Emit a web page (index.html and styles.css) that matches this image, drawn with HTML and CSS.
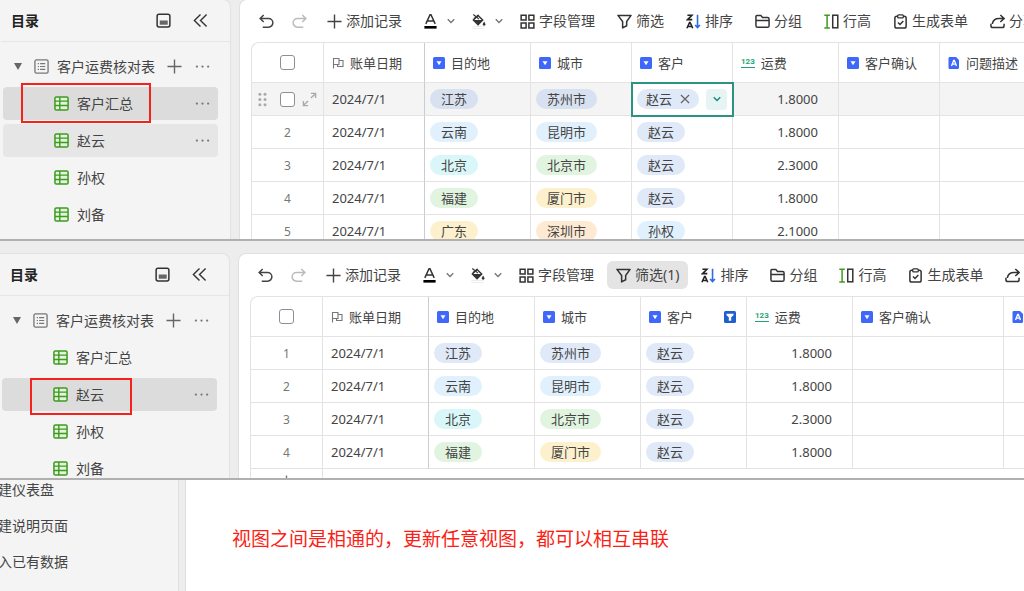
FILE: index.html
```html
<!DOCTYPE html>
<html lang="zh-CN">
<head>
  <meta charset="UTF-8" />
  <meta name="viewport" content="width=device-width, initial-scale=1.0"/>
  <title>客户运费核对表</title>
  <link rel="stylesheet" href="styles.css">
</head>
<body>

  <svg class="sprite" aria-hidden="true">
    <symbol id="i-panel" viewBox="0 0 16 16"><rect x="1.2" y="1.2" width="13.6" height="13.6" rx="2" fill="none" stroke="#333" stroke-width="1.6"/><rect x="4" y="8" width="8.5" height="4.5" fill="#666"/></symbol>
    <symbol id="i-collapse" viewBox="0 0 16 16"><path d="M8 1.5L1.5 8 8 14.5M14.500 1.5L8 8l6.5 6.5" fill="none" stroke="#333" stroke-width="1.5"/></symbol>
    <symbol id="i-list" viewBox="0 0 16 16"><rect x="1" y="1" width="14" height="14" rx="1.5" fill="none" stroke="#777" stroke-width="1.4"/><path d="M4 5h1.3M4 8h1.3M4 11h1.3M6.500 5H12M6.500 8H12M6.500 11H12" stroke="#777" stroke-width="1.3"/></symbol>
    <symbol id="i-plus" viewBox="0 0 16 16"><path d="M8 .5v15M.5 8h15" stroke="currentColor" stroke-width="1.5"/></symbol>
    <symbol id="i-more" viewBox="0 0 16 16"><circle cx="2" cy="8" r="1.2" fill="#777"/><circle cx="8" cy="8" r="1.2" fill="#777"/><circle cx="14" cy="8" r="1.2" fill="#777"/></symbol>
    <symbol id="i-sheet" viewBox="0 0 16 16"><rect x="1" y="1" width="14" height="14" rx="1.5" fill="#e3f3dc" stroke="#3f9a22" stroke-width="1.6"/><path d="M1 5.5h14M1 10.2h14M6.2 1v14" stroke="#3f9a22" stroke-width="1.5"/></symbol>
    <symbol id="i-undo" viewBox="0 0 16 16"><path d="M5 1L1.2 4.800 5 8.600M1.2 4.800h9a4.600 4.600 0 0 1 0 9.200H4" fill="none" stroke="currentColor" stroke-width="1.6"/></symbol>
    <symbol id="i-redo" viewBox="0 0 16 16"><path d="M11 1l3.8 3.8L11 8.600M14.800 4.800h-9a4.600 4.600 0 0 0 0 9.200H12" fill="none" stroke="currentColor" stroke-width="1.6"/></symbol>
    <symbol id="i-color" viewBox="0 0 16 16"><path d="M3 10.500L7.500 .800h1L13 10.500M4.500 7.500h7" fill="none" stroke="#333" stroke-width="1.6"/><rect x="1.500" y="12.800" width="13" height="2.800" fill="#000"/></symbol>
    <symbol id="i-fill" viewBox="0 0 16 16"><path d="M2.500 6.500L7.500 1.500l5 5-5 5z" fill="none" stroke="#333" stroke-width="1.5"/><path d="M2.500 6.500h10l-5 5z" fill="#333"/><path d="M2.500 .500l6 5M8 1L3 5" stroke="#333" stroke-width="1.3"/><path d="M14 8l1.300 2.300a1.500 1.500 0 1 1-2.600 0z" fill="#333"/><rect x="2" y="13.300" width="12" height="2.200" rx=".5" fill="#fff" stroke="#ddd" stroke-width=".6"/></symbol>
    <symbol id="i-down" viewBox="0 0 16 16"><path d="M1.500 4.500L8 11l6.500-6.500" fill="none" stroke="currentColor" stroke-width="2.800"/></symbol>
    <symbol id="i-fields" viewBox="0 0 16 16"><path d="M1.200 1.200h5.300v5.300H1.200zM9.500 1.200h5.300v5.300H9.500zM1.200 9.500h5.300v5.300H1.200zM9.500 9.500h5.300v5.300H9.500z" fill="none" stroke="#333" stroke-width="1.6"/></symbol>
    <symbol id="i-filter" viewBox="0 0 16 16"><path d="M1 1.500h14L10.300 8v4.500L6 14.800V8z" fill="none" stroke="#333" stroke-width="1.6" stroke-linejoin="round"/></symbol>
    <symbol id="i-sort" viewBox="0 0 16 16"><path d="M1.500 1.300h4.800L1.700 6h5M1 15.200L3.800 9h.6l2.800 6.200M2.200 13.300H6" fill="none" stroke="#222" stroke-width="1.7"/><path d="M12.300 .800v13.400M9.700 11.800l2.600 2.700 2.600-2.700" fill="none" stroke="#2b6be4" stroke-width="1.7"/></symbol>
    <symbol id="i-group" viewBox="0 0 16 16"><path d="M1 12.500v-10Q1 1.500 2 1.500h4.200L8 3.800h5.500Q15 3.800 15 5.200v7.300q0 1.700-1.700 1.700H2.700Q1 14.200 1 12.500zM1.200 7h13.600" fill="none" stroke="#333" stroke-width="1.6"/></symbol>
    <symbol id="i-height" viewBox="0 0 16 16"><path d="M.3 1.200h6M.3 14.800h6M3.300 1.200v13.600" fill="none" stroke="#3f9a22" stroke-width="1.6"/><rect x="9.300" y="1.300" width="5.400" height="13.400" fill="none" stroke="#333" stroke-width="1.6"/></symbol>
    <symbol id="i-form" viewBox="0 0 16 16"><rect x="2" y="2.300" width="12" height="12.700" rx="2" fill="none" stroke="#333" stroke-width="1.6"/><rect x="5" y="1" width="6" height="3.200" rx="1" fill="#fff" stroke="#333" stroke-width="1.4"/><path d="M5.300 9l2.200 2.200L11 7.500" fill="none" stroke="#333" stroke-width="1.6"/></symbol>
    <symbol id="i-share" viewBox="0 0 16 16"><path d="M11 1l4 3.800-4 3.800M14.500 4.800h-5Q3.500 4.800 2.500 10.500M1 10.500v2q0 2 2 2h10q2 0 2-2v-2" fill="none" stroke="#333" stroke-width="1.6"/></symbol>
    <symbol id="i-flag" viewBox="0 0 12 12"><path d="M1.500 11.500v-10H7v6H1.500M7 3.500h4v6H5.500v-2" fill="none" stroke="#777" stroke-width="1.1"/></symbol>
    <symbol id="i-select" viewBox="0 0 12 12"><rect width="12" height="12" rx="1.5" fill="#3f68fb"/><path d="M3.500 4.300h5L6 8.200z" fill="#fff"/></symbol>
    <symbol id="i-text" viewBox="0 0 12 12"><path d="M1.500 0H8l3 3v7.500q0 1.500-1.500 1.500h-8Q.5 12 .5 10.500v-9Q.5 0 1.500 0z" fill="#3f68fb"/><path d="M3.500 9l2.200-5.700h.6L8.500 9M4.500 7.200h3" fill="none" stroke="#fff" stroke-width="1.3"/></symbol>
    <symbol id="i-filtered" viewBox="0 0 12 12"><rect width="12" height="12" rx="1.5" fill="#1f5fd0"/><path d="M2.500 2.800h7v1.400L7.200 6.300v3.500H4.800V6.300L2.500 4.200z" fill="#fff"/></symbol>
    <symbol id="i-drag" viewBox="0 0 16 16"><g fill="#aaa"><circle cx="2" cy="2.500" r="1.600"/><circle cx="7.500" cy="2.500" r="1.600"/><circle cx="2" cy="8" r="1.600"/><circle cx="7.500" cy="8" r="1.600"/><circle cx="2" cy="13.500" r="1.600"/><circle cx="7.500" cy="13.500" r="1.600"/></g></symbol>
    <symbol id="i-expand" viewBox="0 0 16 16"><path d="M9.500 1.500h5v5M14.500 1.500l-5 5M6.500 14.500h-5v-5M1.500 14.500l5-5" fill="none" stroke="#aaa" stroke-width="1.5"/></symbol>
    <symbol id="i-close" viewBox="0 0 16 16"><path d="M1.500 1.500l13 13M14.500 1.500l-13 13" stroke="#666" stroke-width="2"/></symbol>
  </svg>

  <section class="shot shot-first">
    <aside class="sidebar">
      <header class="side-head">
        <h2>目录</h2>
        <button aria-label="面板"><svg class="icon"><use href="#i-panel"/></svg></button>
        <button aria-label="收起"><svg class="icon"><use href="#i-collapse"/></svg></button>
      </header>
      <ul class="tree">
        <li class="parent">
          <span class="caret"></span>
          <svg class="icon"><use href="#i-list"/></svg>
          <a href="#">客户运费核对表</a>
          <button aria-label="新增"><svg class="icon"><use href="#i-plus"/></svg></button>
          <button aria-label="更多"><svg class="icon"><use href="#i-more"/></svg></button>
        </li>
        <li class="child active">
          <svg class="icon"><use href="#i-sheet"/></svg><a href="#">客户汇总</a>
          <button aria-label="更多"><svg class="icon"><use href="#i-more"/></svg></button>
          <span class="mark mark-wide"></span>
        </li>
        <li class="child hover">
          <svg class="icon"><use href="#i-sheet"/></svg><a href="#">赵云</a>
          <button aria-label="更多"><svg class="icon"><use href="#i-more"/></svg></button>
        </li>
        <li class="child"><svg class="icon"><use href="#i-sheet"/></svg><a href="#">孙权</a></li>
        <li class="child"><svg class="icon"><use href="#i-sheet"/></svg><a href="#">刘备</a></li>
      </ul>
    </aside>

    <main class="main">
      <div class="toolbar">
        <button class="history" aria-label="撤销"><svg class="icon"><use href="#i-undo"/></svg></button>
        <button class="history disabled" aria-label="重做"><svg class="icon"><use href="#i-redo"/></svg></button>
        <button><svg class="icon"><use href="#i-plus"/></svg>添加记录</button>
        <button class="picker" aria-label="字体颜色"><svg class="icon"><use href="#i-color"/></svg><svg class="chevron"><use href="#i-down"/></svg></button>
        <button class="picker" aria-label="填充颜色"><svg class="icon"><use href="#i-fill"/></svg><svg class="chevron"><use href="#i-down"/></svg></button>
        <button><svg class="icon"><use href="#i-fields"/></svg>字段管理</button>
        <button><svg class="icon"><use href="#i-filter"/></svg>筛选</button>
        <button><svg class="icon"><use href="#i-sort"/></svg>排序</button>
        <button><svg class="icon"><use href="#i-group"/></svg>分组</button>
        <button><svg class="icon"><use href="#i-height"/></svg>行高</button>
        <button><svg class="icon"><use href="#i-form"/></svg>生成表单</button>
        <button><svg class="icon"><use href="#i-share"/></svg>分享</button>
      </div>
      <div class="grid">
        <table>
          <colgroup>
            <col class="w-check"><col class="w-narrow"><col class="w-normal"><col class="w-narrow"><col class="w-narrow"><col class="w-normal"><col class="w-narrow"><col class="w-wide">
          </colgroup>
          <thead>
            <tr>
              <th class="num"><input type="checkbox" aria-label="全选"></th>
              <th><div class="th"><svg><use href="#i-flag"/></svg>账单日期</div></th>
              <th><div class="th"><svg><use href="#i-select"/></svg>目的地</div></th>
              <th><div class="th"><svg><use href="#i-select"/></svg>城市</div></th>
              <th><div class="th"><svg><use href="#i-select"/></svg>客户</div></th>
              <th><div class="th"><span class="digits">123</span>运费</div></th>
              <th><div class="th"><svg><use href="#i-select"/></svg>客户确认</div></th>
              <th><div class="th"><svg><use href="#i-text"/></svg>问题描述</div></th>
            </tr>
          </thead>
          <tbody>
            <tr class="current">
              <td class="num">
                <div class="row-tools">
                  <svg class="icon"><use href="#i-drag"/></svg>
                  <input type="checkbox" aria-label="选择第1行">
                  <svg class="icon"><use href="#i-expand"/></svg>
                </div>
              </td>
              <td>2024/7/1</td>
              <td><span class="tag slate">江苏</span></td>
              <td><span class="tag slate">苏州市</span></td>
              <td class="editing">
                <div class="editor">
                  <span class="tag indigo">赵云<button class="remove" aria-label="移除"><svg><use href="#i-close"/></svg></button></span>
                  <button class="open" aria-label="展开选项"><svg class="chevron"><use href="#i-down"/></svg></button>
                </div>
              </td>
              <td class="amount">1.8000</td><td></td><td></td>
            </tr>
            <tr><td class="num">2</td><td>2024/7/1</td><td><span class="tag sky">云南</span></td><td><span class="tag sky">昆明市</span></td><td><span class="tag indigo">赵云</span></td><td class="amount">1.8000</td><td></td><td></td></tr>
            <tr><td class="num">3</td><td>2024/7/1</td><td><span class="tag cyan">北京</span></td><td><span class="tag green">北京市</span></td><td><span class="tag indigo">赵云</span></td><td class="amount">2.3000</td><td></td><td></td></tr>
            <tr><td class="num">4</td><td>2024/7/1</td><td><span class="tag green">福建</span></td><td><span class="tag yellow">厦门市</span></td><td><span class="tag indigo">赵云</span></td><td class="amount">1.8000</td><td></td><td></td></tr>
            <tr><td class="num">5</td><td>2024/7/1</td><td><span class="tag yellow">广东</span></td><td><span class="tag orange">深圳市</span></td><td><span class="tag sky">孙权</span></td><td class="amount">2.1000</td><td></td><td></td></tr>
          </tbody>
        </table>
      </div>
    </main>
  </section>

  <section class="shot shot-second">
    <aside class="sidebar">
      <header class="side-head">
        <h2>目录</h2>
        <button aria-label="面板"><svg class="icon"><use href="#i-panel"/></svg></button>
        <button aria-label="收起"><svg class="icon"><use href="#i-collapse"/></svg></button>
      </header>
      <ul class="tree">
        <li class="parent">
          <span class="caret"></span>
          <svg class="icon"><use href="#i-list"/></svg>
          <a href="#">客户运费核对表</a>
          <button aria-label="新增"><svg class="icon"><use href="#i-plus"/></svg></button>
          <button aria-label="更多"><svg class="icon"><use href="#i-more"/></svg></button>
        </li>
        <li class="child"><svg class="icon"><use href="#i-sheet"/></svg><a href="#">客户汇总</a></li>
        <li class="child active">
          <svg class="icon"><use href="#i-sheet"/></svg><a href="#">赵云</a>
          <button aria-label="更多"><svg class="icon"><use href="#i-more"/></svg></button>
          <span class="mark mark-narrow"></span>
        </li>
        <li class="child"><svg class="icon"><use href="#i-sheet"/></svg><a href="#">孙权</a></li>
        <li class="child"><svg class="icon"><use href="#i-sheet"/></svg><a href="#">刘备</a></li>
      </ul>
    </aside>

    <div class="main">
      <div class="toolbar">
        <button class="history" aria-label="撤销"><svg class="icon"><use href="#i-undo"/></svg></button>
        <button class="history disabled" aria-label="重做"><svg class="icon"><use href="#i-redo"/></svg></button>
        <button><svg class="icon"><use href="#i-plus"/></svg>添加记录</button>
        <button class="picker" aria-label="字体颜色"><svg class="icon"><use href="#i-color"/></svg><svg class="chevron"><use href="#i-down"/></svg></button>
        <button class="picker" aria-label="填充颜色"><svg class="icon"><use href="#i-fill"/></svg><svg class="chevron"><use href="#i-down"/></svg></button>
        <button><svg class="icon"><use href="#i-fields"/></svg>字段管理</button>
        <button class="on"><svg class="icon"><use href="#i-filter"/></svg>筛选(1)</button>
        <button><svg class="icon"><use href="#i-sort"/></svg>排序</button>
        <button><svg class="icon"><use href="#i-group"/></svg>分组</button>
        <button><svg class="icon"><use href="#i-height"/></svg>行高</button>
        <button><svg class="icon"><use href="#i-form"/></svg>生成表单</button>
        <button aria-label="分享"><svg class="icon"><use href="#i-share"/></svg></button>
      </div>
      <div class="grid">
        <table>
          <colgroup>
            <col class="w-check"><col class="w-normal"><col class="w-normal"><col class="w-normal"><col class="w-normal"><col class="w-normal"><col class="w-wide"><col class="w-wide">
          </colgroup>
          <thead>
            <tr>
              <th class="num"><input type="checkbox" aria-label="全选"></th>
              <th><div class="th"><svg><use href="#i-flag"/></svg>账单日期</div></th>
              <th><div class="th"><svg><use href="#i-select"/></svg>目的地</div></th>
              <th><div class="th"><svg><use href="#i-select"/></svg>城市</div></th>
              <th><div class="th"><svg><use href="#i-select"/></svg>客户<svg class="filtered"><use href="#i-filtered"/></svg></div></th>
              <th><div class="th"><span class="digits">123</span>运费</div></th>
              <th><div class="th"><svg><use href="#i-select"/></svg>客户确认</div></th>
              <th><div class="th"><svg><use href="#i-text"/></svg></div></th>
            </tr>
          </thead>
          <tbody>
            <tr><td class="num">1</td><td>2024/7/1</td><td><span class="tag indigo">江苏</span></td><td><span class="tag indigo">苏州市</span></td><td><span class="tag indigo">赵云</span></td><td class="amount">1.8000</td><td></td><td></td></tr>
            <tr><td class="num">2</td><td>2024/7/1</td><td><span class="tag sky">云南</span></td><td><span class="tag sky">昆明市</span></td><td><span class="tag indigo">赵云</span></td><td class="amount">1.8000</td><td></td><td></td></tr>
            <tr><td class="num">3</td><td>2024/7/1</td><td><span class="tag cyan">北京</span></td><td><span class="tag green">北京市</span></td><td><span class="tag indigo">赵云</span></td><td class="amount">2.3000</td><td></td><td></td></tr>
            <tr><td class="num">4</td><td>2024/7/1</td><td><span class="tag green">福建</span></td><td><span class="tag yellow">厦门市</span></td><td><span class="tag indigo">赵云</span></td><td class="amount">1.8000</td><td></td><td></td></tr>
            <tr class="add"><td class="num"><svg class="icon"><use href="#i-plus"/></svg></td><td colspan="7"></td></tr>
          </tbody>
        </table>
      </div>
    </div>
  </section>

  <section class="shot shot-third">
    <nav class="create">
      <a href="#">建仪表盘</a>
      <a href="#">建说明页面</a>
      <a href="#">入已有数据</a>
    </nav>
    <div class="note">
      <p>视图之间是相通的，更新任意视图，都可以相互串联</p>
    </div>
  </section>

</body>
</html>
```
FILE: styles.css
```css
* {
  box-sizing: border-box;
}

body {
  margin: 0;
  height: 100vh;
  display: grid;
  grid-template-rows: 241fr 239fr 111fr;
  overflow: hidden;
  font-family: "Noto Sans", "Noto Sans CJK SC", sans-serif;
  font-size: 14px;
  color: #444;
  background-color: #ededed;
}

.sprite {
  position: absolute;
  width: 0;
  height: 0;
}

button {
  display: flex;
  align-items: center;
  padding: 0;
  border: none;
  background: none;
  font: inherit;
  color: inherit;
  white-space: nowrap;
  cursor: pointer;
}

a {
  color: inherit;
  text-decoration: none;
}

.icon {
  display: block;
  flex: none;
  width: 15px;
  height: 15px;
}

.chevron {
  flex: none;
  width: 8px;
  height: 8px;
  color: #777;
}

/* stacked panels */
.shot {
  display: flex;
  gap: 8px;
  min-height: 0;
  overflow: hidden;
  background-color: #ededed;
}

.shot-first,
.shot-second {
  border-bottom: 2px solid #b0b0b0;
}

.shot-first > * {
  margin-top: -1px;
}

.shot-second {
  padding-top: 12px;
}

.shot-second .sidebar {
  width: 230px;
  padding-left: 0;
}

/* sidebar */
.sidebar {
  flex: none;
  width: 231px;
  padding-left: 1px;
  background-color: #f4f4f4;
  border: 1px solid #e2e2e2;
  border-width: 1px 1px 0 0;
  border-radius: 0 8px 0 0;
}

.side-head {
  display: flex;
  align-items: center;
  gap: 22px;
  height: 42px;
  padding: 0 22px 0 10px;
  border-bottom: 1px solid #e6e6e6;
}

.side-head h2 {
  flex: 1;
  margin: 0;
  font-size: 14px;
  font-weight: 700;
  line-height: 20px;
  color: #222;
}

.tree {
  display: flex;
  flex-direction: column;
  gap: 4px;
  margin: 0;
  padding: 8px 12px 0 2px;
  list-style: none;
}

.tree li {
  position: relative;
  display: flex;
  align-items: center;
  gap: 8px;
  height: 33px;
  padding: 0 8px 0 11px;
  border-radius: 4px;
}

.tree a {
  flex: 1;
  line-height: 20px;
  white-space: nowrap;
}

.tree button {
  color: #666;
}

.tree .parent {
  gap: 8px;
}

.parent button + button {
  margin-left: 5px;
}

.parent .caret {
  margin-right: 4px;
  border: 4px solid transparent;
  border-top: 7px solid #666;
  border-bottom: 0;
}

.tree .child {
  padding-left: 51px;
}

.tree .active {
  background-color: #dcdcdc;
}

.tree .hover {
  background-color: #e6e6e6;
}

/* red box drawn round a view name */
.mark {
  position: absolute;
  top: -4px;
  bottom: -3px;
  border: 2px solid #f5221b;
}

.mark-wide {
  left: 18px;
  width: 130px;
}

.mark-narrow {
  top: 0;
  bottom: -4px;
  left: 28px;
  width: 102px;
}

/* toolbar */
.main {
  flex: 1;
  min-width: 0;
  overflow: hidden;
  background-color: #fff;
  border: 1px solid #e0e0e0;
  border-width: 1px 0 0 1px;
  border-radius: 8px 0 0 0;
}

.toolbar {
  display: flex;
  align-items: center;
  gap: 4px;
  height: 42px;
  padding-left: 12px;
}

.toolbar button {
  flex: none;
  gap: 4px;
  height: 28px;
  padding: 0 9px;
  border-radius: 6px;
  line-height: 20px;
}

.toolbar .history {
  padding: 0 7px;
}

.toolbar .disabled {
  color: #bbb;
}

.toolbar .picker {
  gap: 9px;
  padding: 0 4px 0 8px;
}

.toolbar .on {
  background-color: #e4e4e4;
}

/* data grid */
.grid {
  margin-left: 11px;
  overflow: hidden;
  border: 1px solid #e3e3e3;
  border-width: 1px 0 0 1px;
  border-radius: 8px 0 0 0;
}

table {
  width: max-content;
  table-layout: fixed;
  border-spacing: 0;
  font-size: 13px;
}

.w-check { width: 72px; }
.w-narrow { width: 101px; }
.w-normal { width: 106px; }
.w-wide { width: 151px; }

th,
td {
  height: 33px;
  padding: 0 6px 0 8px;
  border: 1px solid #e3e3e3;
  border-width: 0 1px 1px 0;
  text-align: left;
  font-weight: 400;
  white-space: nowrap;
}

th {
  height: 40px;
}

td:has(.tag) {
  padding-left: 5px;
}

th:nth-child(2),
td:nth-child(2) {
  border-right-color: #c9ccd3;
}

.th {
  display: flex;
  align-items: center;
  gap: 6px;
  line-height: 20px;
}

.th svg {
  flex: none;
  width: 12px;
  height: 12px;
}

.th .filtered {
  margin: 0 4px 0 auto;
}

.digits {
  border-bottom: 1px solid #1fa573;
  font-family: Roboto, sans-serif;
  font-size: 8px;
  font-weight: 700;
  line-height: 10px;
  color: #1fa573;
}

.num {
  padding: 0;
  text-align: center;
  color: #777;
}

td.num {
  font-size: 12px;
}

input[type="checkbox"] {
  appearance: none;
  display: block;
  width: 15px;
  height: 15px;
  margin: 0 auto;
  border: 1px solid #8b8f98;
  border-radius: 3px;
  background-color: #fff;
}

.row-tools {
  display: flex;
  align-items: center;
  justify-content: center;
  gap: 7px;
}

.row-tools input[type="checkbox"] {
  margin: 0;
}

.current td {
  background-color: #f4f4f4;
}

.amount {
  padding-right: 20px;
  text-align: right;
}

.add .num {
  padding-top: 6px;
  vertical-align: top;
}

.add .num .icon {
  margin: 0 auto;
}

.add td:last-child {
  border-right: 0;
}

.tag {
  display: inline-flex;
  align-items: center;
  height: 20px;
  padding: 0 11px;
  border-radius: 10px;
  line-height: 20px;
}

.slate { background-color: #d8e1f0; }
.indigo { background-color: #dfe9f8; }
.sky { background-color: #e0f1fd; }
.cyan { background-color: #d9f6f8; }
.green { background-color: #e0f4e0; }
.yellow { background-color: #fdf1cd; }
.orange { background-color: #feead2; }

.current .editing {
  padding-right: 2px;
  background-color: #fff;
  outline: 2px solid #2a9384;
  outline-offset: -1px;
}

.editor {
  display: flex;
  align-items: center;
  gap: 7px;
}

.editor .tag {
  padding: 0 9px;
}

.remove {
  margin-left: 8px;
}

.remove svg {
  width: 10px;
  height: 10px;
}

.open {
  flex: none;
  justify-content: center;
  width: 21px;
  height: 21px;
  border-radius: 4px;
  background-color: #e6f4f3;
}

.open .chevron {
  color: #158a7a;
}

/* bottom strip */
.create {
  display: flex;
  flex-direction: column;
  gap: 17px;
  flex: none;
  width: 181px;
  margin: 0 -2px 0 -2px;
  background-color: #f4f4f4;
  border-right: 1px solid #e0e0e0;
  line-height: 19px;
}

.shot-third .note {
  flex: 1;
  padding: 45px 46px;
  background-color: #fff;
  border-left: 1px solid #ddd;
}

.note p {
  margin: 0;
  font-size: 19px;
  line-height: 28px;
  color: #fb1f17;
}
```
